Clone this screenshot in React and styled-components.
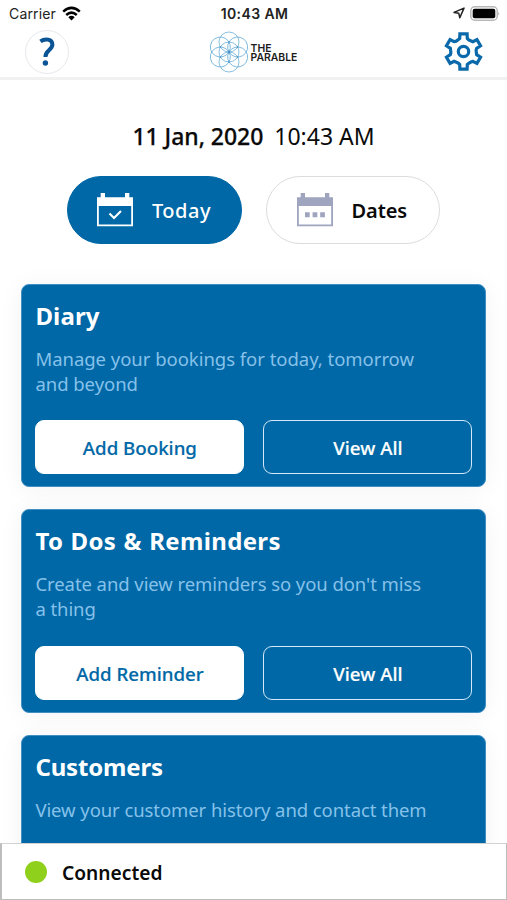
import React from 'react';
import styled, { createGlobalStyle } from 'styled-components';

const BLUE = '#0068a6';

const GlobalStyle = createGlobalStyle`
  *, *::before, *::after { box-sizing: border-box; }
  body { margin: 0; background: #fff; }
  button { font: inherit; margin: 0; padding: 0; cursor: pointer; }
`;

const Screen = styled.div`
  display: flex;
  flex-direction: column;
  width: 507px;
  height: 900px;
  overflow: hidden;
  background: #fff;
  color: #0a0a0a;
  font-family: 'Noto Sans', 'Open Sans', sans-serif;
`;

const StatusBar = styled.div`
  display: grid;
  grid-template-columns: 1fr auto 1fr;
  align-items: center;
  height: 28px;
  padding: 0 7px 1px 9px;
  flex: none;
  font-family: Inter, 'Liberation Sans', sans-serif;
  font-size: 14px;
  line-height: 27px;
  color: #222;
`;

const Carrier = styled.div`
  display: flex;
  align-items: center;
  gap: 6px;
  letter-spacing: 0.15px;
`;

const Clock = styled.div`
  font-weight: 600;
  letter-spacing: 0.4px;
`;

const StatusIcons = styled.div`
  display: flex;
  align-items: center;
  justify-content: flex-end;
  gap: 5px;
  padding-bottom: 1px;
`;

const Header = styled.header`
  display: grid;
  grid-template-columns: 1fr auto 1fr;
  align-items: center;
  flex: none;
  height: 52px;
  padding: 0 23px 2px 25px;
  border-bottom: 3px solid #f1f1f1;
`;

const HelpButton = styled.button`
  display: flex;
  align-items: center;
  justify-content: center;
  width: 44px;
  height: 44px;
  border: 1px solid #e6e8ec;
  border-radius: 50%;
  background: #fff;
`;

const SettingsButton = styled.button`
  display: flex;
  justify-self: end;
  border: 0;
  background: none;
`;

const Brand = styled.div`
  display: flex;
  align-items: center;
  gap: 2px;
  padding-right: 3px;
`;

const BrandName = styled.div`
  display: flex;
  flex-direction: column;
  padding-top: 2px;
  font-family: Inter, 'Liberation Sans', sans-serif;
  font-size: 10.4px;
  font-weight: 600;
  line-height: 9px;
  color: #1c1c1c;
`;

const Content = styled.main`
  flex: 1;
  min-height: 0;
  overflow: hidden;
`;

const DateLine = styled.div`
  display: flex;
  justify-content: center;
  gap: 11px;
  margin-top: 40px;
  height: 32px;
  font-size: 23px;
  line-height: 32px;
  white-space: nowrap;
`;

const Day = styled.span`
  font-weight: 500;
  letter-spacing: -0.05px;
  -webkit-text-stroke: 0.25px currentColor;
`;

const Time = styled.span`
  letter-spacing: 0;
`;

const Filters = styled.div`
  display: flex;
  justify-content: center;
  gap: 24px;
  margin-top: 23.5px;
`;

const Pill = styled.button`
  display: flex;
  align-items: center;
  gap: 18px;
  width: 174.5px;
  height: 68.5px;
  padding: 1px 0 0 ${(p) => (p.$active ? 29 : 30)}px;
  border: 1px solid ${(p) => (p.$active ? BLUE : '#dcdcde')};
  border-radius: 35px;
  background: ${(p) => (p.$active ? BLUE : '#fff')};
  color: ${(p) => (p.$active ? '#fff' : '#0a0a0a')};
  font-size: 20px;
  font-weight: ${(p) => (p.$active ? 500 : 600)};
  line-height: 28px;
  letter-spacing: ${(p) => (p.$active ? 0.5 : -0.1)}px;
`;

const PillLabel = styled.span`
  padding-top: 1px;
`;

const CardList = styled.div`
  display: flex;
  flex-direction: column;
  gap: 22px;
  padding: 39.5px 20.6px 0 21.4px;
`;

const Card = styled.section`
  flex: none;
  height: 203.7px;
  padding: 15px 13px 0;
  border: 1px solid #3f8fc4;
  border-radius: 8px;
  background: ${BLUE};
  box-shadow: 0 2px 24px rgba(0, 0, 0, 0.05);
`;

const CardTitle = styled.h2`
  margin: 0;
  font-size: 24px;
  font-weight: 700;
  line-height: 31px;
  letter-spacing: ${(p) => p.$tracking}px;
  word-spacing: ${(p) => p.$wordGap || 0}px;
  color: #fff;
`;

const CardText = styled.p`
  margin: 15px 0 0;
  height: 50px;
  font-size: 18.5px;
  line-height: 25px;
  letter-spacing: ${(p) => p.$tracking}px;
  color: #86c1ea;
  white-space: pre-line;
`;

const Actions = styled.div`
  display: grid;
  grid-template-columns: 1fr 1fr;
  gap: 19px;
  margin-top: 24.5px;
`;

const ActionButton = styled.button`
  height: 54px;
  padding-top: 2px;
  border: 1px solid ${(p) => (p.$outlined ? '#d3e9f8' : '#fff')};
  border-radius: 9px;
  background: ${(p) => (p.$outlined ? 'transparent' : '#fff')};
  color: ${(p) => (p.$outlined ? '#fff' : BLUE)};
  font-size: 18.7px;
  font-weight: 500;
  line-height: 26px;
  -webkit-text-stroke: 0.2px currentColor;
`;

const Footer = styled.footer`
  display: flex;
  align-items: center;
  gap: 15px;
  flex: none;
  height: 57.5px;
  padding: 3px 0 0 23px;
  border: 1px solid #bdbdbd;
  border-top-color: #d2d2d2;
  border-left-width: 2px;
  background: #fff;
  font-size: 19.2px;
  font-weight: 600;
  line-height: 26px;
`;

const StatusDot = styled.span`
  width: 22px;
  height: 22px;
  margin-top: -2px;
  border-radius: 50%;
  background: #8fd01c;
`;

const WifiIcon = () => (
  <svg width="19" height="15" viewBox="0 0 19 15">
    <g fill="none" stroke="#000" strokeWidth="2.5">
      <path d="M1.2 5.6Q9.5-1.8 17.8 5.6" />
      <path d="M4.2 9Q9.5 4.3 14.8 9" />
    </g>
    <path d="M6.3 11.2Q9.5 8.4 12.7 11.2L9.5 14.5Z" fill="#000" />
  </svg>
);

const LocationIcon = () => (
  <svg width="12" height="12" viewBox="0 0 12 12">
    <path d="M1 5.4L11 1.1L6.8 10.8L5.8 6.3Z" fill="none" stroke="#222" strokeWidth="1.5" strokeLinejoin="round" />
  </svg>
);

const BatteryIcon = () => (
  <svg width="30" height="15" viewBox="0 0 30 15">
    <rect x=".8" y=".8" width="26.4" height="13.4" rx="4" fill="#fff" stroke="#b8b8b8" strokeWidth="1.5" />
    <rect x="2.7" y="2.7" width="22.6" height="9.6" rx="2" fill="#000" />
    <path d="M28.3 5.2Q30 7.5 28.3 9.8Z" fill="#aaa" />
  </svg>
);

const HelpIcon = () => (
  <svg width="16" height="30" viewBox="0 0 16 30">
    <path d="M1.4 4.4C6 1.2 13.4 1.8 13.4 7.6C13.4 13 6.4 13.2 6.4 20" fill="none" stroke="#0b5496" strokeWidth="4" />
    <circle cx="6.4" cy="26" r="2.7" fill="#0b5496" />
  </svg>
);

const petals = [0, 60, 120, 180, 240, 300];

const FlowerLogo = () => (
  <svg width="40" height="42" viewBox="-20 -21 40 42">
    <g fill="none" stroke="#64abd6" strokeWidth=".75">
      <circle r="10" />
      {petals.map((a) => (
        <circle key={a} r="10" cy="-10" transform={`rotate(${a})`} />
      ))}
    </g>
    <g fill="#4a93c4">
      <circle r="1.2" />
      {petals.map((a) => (
        <circle key={a} r=".8" cy="-10" transform={`rotate(${a})`} />
      ))}
    </g>
  </svg>
);

const gearSegment = (angle) => {
  const r = (angle * Math.PI) / 180;
  const pt = (x, y) =>
    `${(x * Math.cos(r) - y * Math.sin(r)).toFixed(2)} ${(x * Math.sin(r) + y * Math.cos(r)).toFixed(2)}`;
  return `${pt(-3.6, -17.6)} L${pt(3.6, -17.6)} L${pt(3.8, -13)} Q${pt(5, -11.3)} ${pt(7.1, -10.7)} Q${pt(8.3, -10.2)} ${pt(9.36, -9.79)}`;
};

const GearIcon = () => (
  <svg width="41" height="41" viewBox="-20.5 -20.5 41 41">
    <g fill="none" stroke="#0a69aa" strokeWidth="3.2" strokeLinejoin="miter">
      <path d={`M${petals.map(gearSegment).join(' L')}Z`} />
      <circle r="5.2" />
    </g>
  </svg>
);

const CalendarIcon = ({ color, checked }) => (
  <svg width="37" height="34" viewBox="0 0 37 34">
    <path d="M0 4.3H3.7V0H8V4.3H28V0H32.3V4.3H36V33.2H0ZM1.8 13V31.4H34.2V13Z" fill={color} fillRule="evenodd" />
    {checked ? (
      <path d="M12.5 20.5L17 25L24 18" fill="none" stroke={color} strokeWidth="2.1" />
    ) : (
      <path d="M8 19.2H12.7V24.2H8ZM15.6 19.2H20.3V24.2H15.6ZM23.2 19.2H27.9V24.2H23.2Z" fill={color} />
    )}
  </svg>
);

const cards = [
  {
    title: 'Diary',
    titleTracking: 0.15,
    text: 'Manage your bookings for today, tomorrow\nand beyond',
    textTracking: -0.03,
    action: 'Add Booking',
  },
  {
    title: 'To Dos & Reminders',
    titleTracking: 0.35,
    wordGap: 0.7,
    text: "Create and view reminders so you don't miss\na thing",
    textTracking: -0.07,
    action: 'Add Reminder',
  },
  {
    title: 'Customers',
    titleTracking: -0.15,
    text: 'View your customer history and contact them',
    textTracking: -0.08,
  },
];

export default function App() {
  return (
    <Screen>
      <GlobalStyle />
      <StatusBar>
        <Carrier>
          Carrier
          <WifiIcon />
        </Carrier>
        <Clock>10:43 AM</Clock>
        <StatusIcons>
          <LocationIcon />
          <BatteryIcon />
        </StatusIcons>
      </StatusBar>
      <Header>
        <HelpButton aria-label="Help">
          <HelpIcon />
        </HelpButton>
        <Brand>
          <FlowerLogo />
          <BrandName>
            <span>THE</span>
            <span>PARABLE</span>
          </BrandName>
        </Brand>
        <SettingsButton aria-label="Settings">
          <GearIcon />
        </SettingsButton>
      </Header>
      <Content>
        <DateLine>
          <Day>11 Jan, 2020</Day>
          <Time>10:43 AM</Time>
        </DateLine>
        <Filters>
          <Pill $active>
            <CalendarIcon color="#fff" checked />
            <PillLabel>Today</PillLabel>
          </Pill>
          <Pill>
            <CalendarIcon color="#9fa4bf" />
            <PillLabel>Dates</PillLabel>
          </Pill>
        </Filters>
        <CardList>
          {cards.map((card) => (
            <Card key={card.title}>
              <CardTitle $tracking={card.titleTracking} $wordGap={card.wordGap}>
                {card.title}
              </CardTitle>
              <CardText $tracking={card.textTracking}>{card.text}</CardText>
              {card.action && (
                <Actions>
                  <ActionButton>{card.action}</ActionButton>
                  <ActionButton $outlined>View All</ActionButton>
                </Actions>
              )}
            </Card>
          ))}
        </CardList>
      </Content>
      <Footer>
        <StatusDot />
        Connected
      </Footer>
    </Screen>
  );
}
